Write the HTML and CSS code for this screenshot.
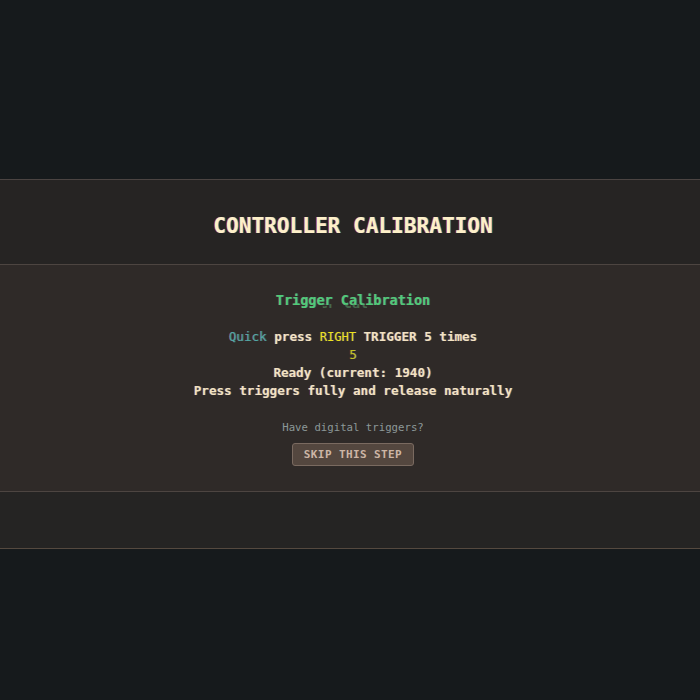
FILE: index.html
```html
<!DOCTYPE html>
<html lang="en">
<head>
    <meta charset="UTF-8">
    <meta name="viewport" content="width=device-width, initial-scale=1.0">
    <title>Controller Calibration</title>
    <link rel="stylesheet" href="styles.css">
</head>
<body>
    <div class="panel">
        <!-- header -->
        <div class="panel-header">
            <h1 class="title">CONTROLLER CALIBRATION</h1>
        </div>

        <!-- current step -->
        <div class="panel-body">
            <h2 class="step-title" data-text="Trigger Calibration">Trigger Calibration</h2>

            <div class="instructions">
                <div><span class="quick">Quick</span> press <span class="side">RIGHT</span> TRIGGER 5 times</div>
                <div class="count">5</div>
                <div>Ready (current: 1940)</div>
                <div>Press triggers fully and release naturally</div>
            </div>

            <p class="hint">Have digital triggers?</p>
            <button class="skip-btn">SKIP THIS STEP</button>
        </div>

        <!-- footer -->
        <div class="panel-footer"></div>
    </div>
</body>
</html>
```

FILE: styles.css
```css
body {
    margin: 0;
    padding: 179px 0 0;
    background-color: #161a1c;
    font-family: "DejaVu Sans Mono", "Liberation Mono", monospace;
    color: #f3e2c2;
}

.panel {
    border-top: 1px solid #4b4442;
    border-bottom: 1px solid #55493f;
}

.panel-header {
    background-color: #262423;
    padding: 33px 0 25px 6px;
    border-bottom: 1px solid #4d4541;
    text-align: center;
}

.title {
    margin: 0;
    font-size: 21.1px;
    line-height: 26px;
    font-weight: bold;
    color: #fdf0c8;
    text-shadow: -1px 0 rgba(255, 40, 60, 0.55), 1px 0 rgba(40, 200, 255, 0.55);
}

.panel-body {
    background-color: #2f2a28;
    padding: 25px 0 0 6px;
    height: 201px;
    border-bottom: 1px solid #4d4541;
    text-align: center;
}

.step-title {
    position: relative;
    display: inline-block;
    margin: 0;
    font-size: 13.5px;
    line-height: 18px;
    font-weight: bold;
    color: #4fcb78;
    text-shadow: -1px 0 rgba(255, 60, 60, 0.25), 1px 0 rgba(60, 200, 255, 0.3);
}

/* glitch slice under the step title */
.step-title::after {
    content: attr(data-text);
    position: absolute;
    left: 0;
    top: 0;
    white-space: nowrap;
    color: #5a9a68;
    opacity: 0.55;
    transform: translate(3px, 3px);
    clip-path: inset(10px 66px 3px 44px);
    text-shadow: none;
}

.instructions {
    margin-top: 19px;
    font-size: 12.6px;
    line-height: 18px;
    font-weight: bold;
    color: #f3e2c2;
    text-shadow: -1px 0 rgba(255, 60, 60, 0.25), 1px 0 rgba(60, 200, 255, 0.3);
}

.quick {
    font-weight: normal;
    color: #4fa9a6;
}

.side {
    font-weight: normal;
    font-size: 12px;
    color: #eee31a;
}

.count {
    font-weight: normal;
    color: #c2c21e;
}

.hint {
    margin: 20px 0 7px;
    font-size: 10.7px;
    line-height: 16px;
    color: #8c9898;
}

.skip-btn {
    display: block;
    margin: 0 auto;
    font-family: "DejaVu Sans Mono", "Liberation Mono", monospace;
    font-size: 11px;
    font-weight: bold;
    letter-spacing: 0.4px;
    color: #cdb6a6;
    background-color: #54473f;
    border: 1px solid #7a6a60;
    border-radius: 3px;
    height: 23px;
    padding: 0 11px;
    cursor: pointer;
}

.panel-footer {
    background-color: #252423;
    height: 56px;
}
```
